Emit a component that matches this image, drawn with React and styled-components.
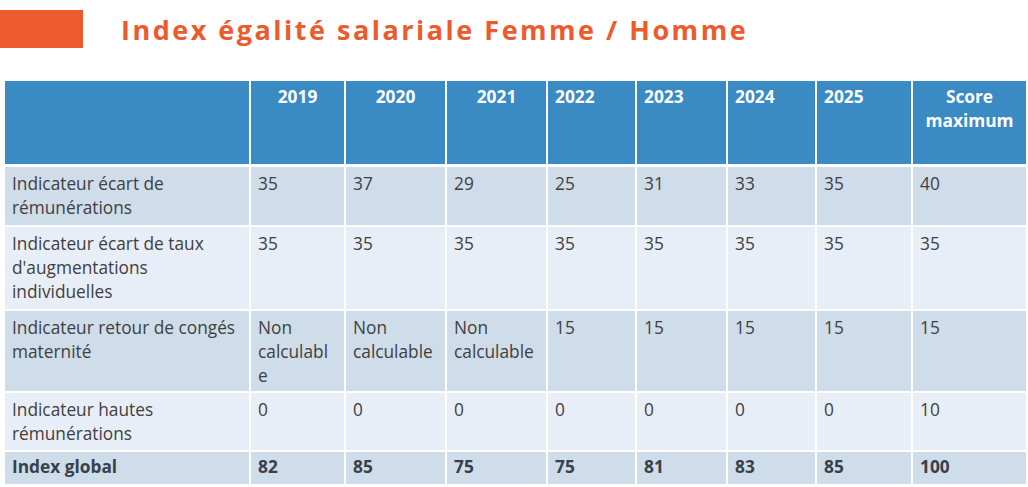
import React from 'react';
import styled, { createGlobalStyle } from 'styled-components';

const GlobalStyle = createGlobalStyle`
  body {
    margin: 0;
    background: #fff;
    font-family: "Open Sans", "Noto Sans", sans-serif;
  }
`;

const Page = styled.div`
  width: 1028px;
  height: 487px;
  overflow: hidden;
  background: #fff;
`;

const TitleBar = styled.header`
  display: flex;
  align-items: center;
  gap: 38px;
  padding-top: 10px;
  height: 38px;
`;

const Tab = styled.div`
  width: 83px;
  height: 38px;
  background: #ec5b2d;
`;

const Title = styled.h1`
  margin: 0;
  font-size: 27px;
  font-weight: 700;
  letter-spacing: 2.5px;
  color: #ec5b2d;
`;

const TableWrap = styled.div`
  padding: 33px 2px 0 5px;
`;

const Table = styled.table`
  width: 1021px;
  table-layout: fixed;
  border-collapse: collapse;
  font-size: 17.3px;
  line-height: 24px;
  color: #404040;
`;

const HeadCell = styled.th`
  height: 84px;
  box-sizing: border-box;
  vertical-align: top;
  padding: 4px 7px;
  background: #3a8ac4;
  color: #fff;
  font-weight: 700;
  text-align: ${p => (p.$center ? 'center' : 'left')};
  border-left: 2px solid #fff;
  border-bottom: 3px solid #fff;
  &:first-child {
    border-left: none;
  }
`;

const Row = styled.tr`
  height: ${p => p.$h}px;
  background: ${p => (p.$odd ? '#cfdcea' : '#e8eef7')};
  font-weight: ${p => (p.$bold ? 700 : 400)};
  color: ${p => (p.$bold ? '#36414b' : '#404040')};
`;

const Cell = styled.td`
  vertical-align: top;
  padding: ${p => (p.$bold ? '3px' : '5px')} 7px 0;
  overflow-wrap: anywhere;
  border-left: 2px solid #fff;
  border-top: 2px solid #fff;
  &:first-child {
    border-left: none;
  }
`;

const widths = [245, 95, 101, 101, 89, 91, 89, 96, 114];

const head = [
  { t: '', c: false },
  { t: '2019', c: true },
  { t: '2020', c: true },
  { t: '2021', c: true },
  { t: '2022', c: false },
  { t: '2023', c: false },
  { t: '2024', c: false },
  { t: '2025', c: false },
  { t: <>Score<br />maximum</>, c: true },
];

const rows = [
  { h: 61, cells: ['Indicateur écart de rémunérations', '35', '37', '29', '25', '31', '33', '35', '40'] },
  { h: 84, cells: ["Indicateur écart de taux d'augmentations individuelles", '35', '35', '35', '35', '35', '35', '35', '35'] },
  { h: 82, cells: ['Indicateur retour de congés maternité', 'Non calculable', 'Non calculable', 'Non calculable', '15', '15', '15', '15', '15'] },
  { h: 59, cells: ['Indicateur hautes rémunérations', '0', '0', '0', '0', '0', '0', '0', '10'] },
  { h: 33, bold: true, cells: ['Index global', '82', '85', '75', '75', '81', '83', '85', '100'] },
];

export default function App() {
  return (
    <Page>
      <GlobalStyle />
      <TitleBar>
        <Tab />
        <Title>Index égalité salariale Femme / Homme</Title>
      </TitleBar>
      <TableWrap>
        <Table>
          <colgroup>
            {widths.map((w, i) => (
              <col key={i} style={{ width: w }} />
            ))}
          </colgroup>
          <thead>
            <tr>
              {head.map((h, i) => (
                <HeadCell key={i} $center={h.c}>{h.t}</HeadCell>
              ))}
            </tr>
          </thead>
          <tbody>
            {rows.map((r, i) => (
              <Row key={i} $h={r.h} $odd={i % 2 === 0} $bold={r.bold}>
                {r.cells.map((c, j) => (
                  <Cell key={j} $bold={r.bold}>{c}</Cell>
                ))}
              </Row>
            ))}
          </tbody>
        </Table>
      </TableWrap>
    </Page>
  );
}
